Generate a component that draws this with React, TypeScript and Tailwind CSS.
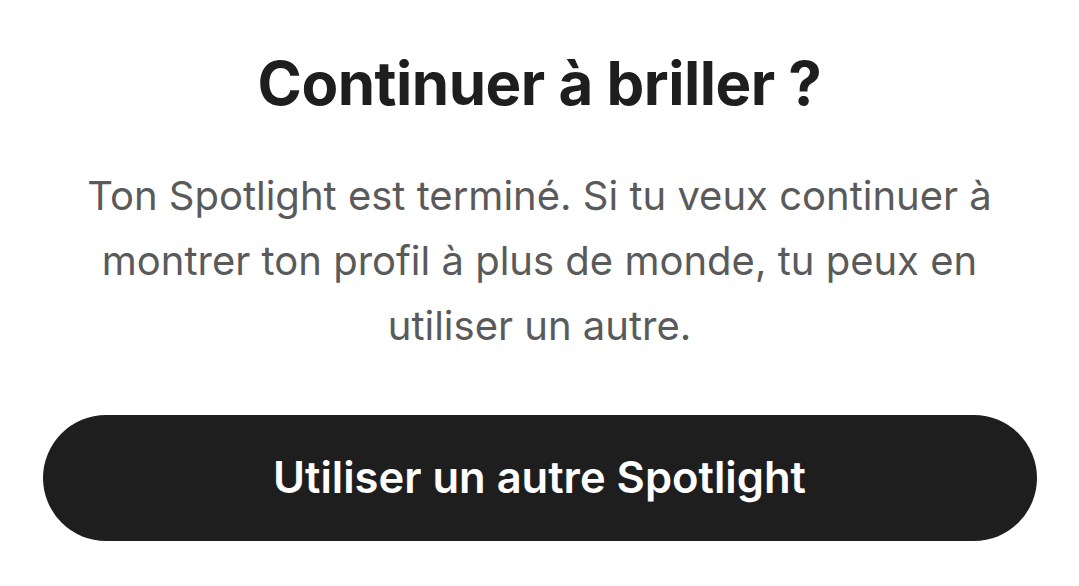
export default function App() {
  return (
    <div
      className="flex h-[586px] w-[1080px] flex-col items-center overflow-hidden border-r border-[#d6d6d6] bg-white"
      style={{ fontFamily: 'Inter, "Noto Sans", sans-serif' }}
    >
      <h1 className="mt-[45px] text-[60px] font-bold leading-[76px] tracking-[-0.5px] text-[#1e1e1e]">
        Continuer à briller ?
      </h1>
      <p className="mt-[42px] w-[940px] text-center text-[40px] leading-[65px] text-[#5a5a5a]">
        Ton Spotlight est terminé. Si tu veux continuer à montrer ton profil à plus de monde, tu peux en utiliser un autre.
      </p>
      <button className="mt-[57px] flex h-[126px] w-[994px] items-center justify-center rounded-full bg-[#1e1e1e] text-[43.5px] font-semibold text-white">
        Utiliser un autre Spotlight
      </button>
    </div>
  );
}
